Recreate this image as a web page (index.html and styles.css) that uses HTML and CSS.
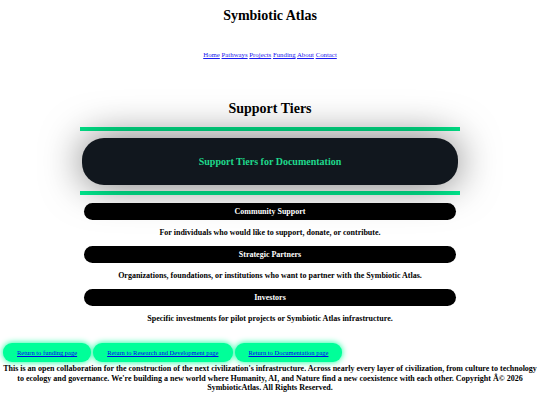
FILE: index.html
```html
<!DOCTYPE html>
<html>
<head>
<meta charset="utf-8">
<link rel="stylesheet" href="styles.css">
</head>
<body>
<header class="site-header">
  <h1 class="site-title">Symbiotic Atlas</h1>
  <nav class="nav">
    <a href="#">Home</a> <a href="#">Pathways</a> <a href="#">Projects</a> <a href="#">Funding</a> <a href="#">About</a> <a href="#">Contact</a>
  </nav>
</header>
<main class="main">
  <h2 class="section-title">Support Tiers</h2>
  <section class="tiers-frame">
    <div class="hero-card">Support Tiers for Documentation</div>
  </section>
  <div class="tier-list">
    <div class="tier-bar">Community Support</div>
    <p class="tier-desc">For individuals who would like to support, donate, or contribute.</p>
    <div class="tier-bar">Strategic Partners</div>
    <p class="tier-desc">Organizations, foundations, or institutions who want to partner with the Symbiotic Atlas.</p>
    <div class="tier-bar">Investors</div>
    <p class="tier-desc">Specific investments for pilot projects or Symbiotic Atlas infrastructure.</p>
  </div>
</main>
<footer class="footer">
  <div class="return-row">
    <a class="return-btn" href="#"><span>Return to funding page</span></a>
    <a class="return-btn" href="#"><span>Return to Research and Development page</span></a>
    <a class="return-btn" href="#"><span>Return to Documentation page</span></a>
  </div>
  <p class="footer-text">This is an open collaboration for the construction of the next civilization's infrastructure. Across nearly every layer of civilization, from culture to technology to ecology and governance. We're building a new world where Humanity, AI, and Nature find a new coexistence with each other. Copyright Â© 2026 SymbioticAtlas. All Rights Reserved.</p>
</footer>
</body>
</html>
```
FILE: styles.css
```css
html, body {
  margin: 0;
  padding: 0;
  background: #ffffff;
}
body {
  font-family: "Liberation Serif", "Times New Roman", serif;
  color: #000;
}
.site-header {
  text-align: center;
}
.site-title {
  margin: 0;
  padding-top: 8px;
  font-size: 14px;
  line-height: 16px;
  font-weight: bold;
}
.nav {
  margin-top: 26px;
  font-size: 6.8px;
  line-height: 9px;
}
.nav a {
  color: #1a1aee;
}
.main {
  padding: 0 80px;
}
.section-title {
  margin: 0;
  margin-top: 42px;
  text-align: center;
  font-size: 14px;
  line-height: 16px;
  font-weight: bold;
}
.tiers-frame {
  margin-top: 10px;
  border-top: 4px solid #00e68a;
  border-bottom: 4px solid #00f092;
  padding: 7px 2px 6px;
}
.hero-card {
  height: 47px;
  background: #11171e;
  border-radius: 22px;
  box-shadow: 0 0 40px rgba(0, 0, 0, 0.55);
  color: #1fd98c;
  font-weight: bold;
  font-size: 10px;
  display: flex;
  align-items: center;
  justify-content: center;
}
.tier-list {
  padding: 8px 4px 0;
  text-align: center;
}
.tier-bar {
  height: 17px;
  background: #000;
  border-radius: 9px;
  color: #fff;
  font-weight: bold;
  font-size: 8px;
  line-height: 17px;
}
.tier-desc {
  margin: 0;
  padding: 8px 0 8px;
  font-weight: bold;
  font-size: 8px;
  line-height: 10px;
}
.footer {
  margin-top: 11px;
}
.return-row {
  display: flex;
  gap: 2px;
  padding-left: 3px;
}
.return-btn {
  display: flex;
  align-items: center;
  justify-content: center;
  height: 19px;
  padding: 0 14px;
  background: #00ff99;
  border-radius: 9px;
  box-shadow: 0 0 6px #00ff99;
  font-size: 6.5px;
  color: #0000ee;
}
.footer-text {
  margin: 2px 0 0;
  text-align: center;
  font-weight: bold;
  font-size: 8px;
  line-height: 9.5px;
}
```
